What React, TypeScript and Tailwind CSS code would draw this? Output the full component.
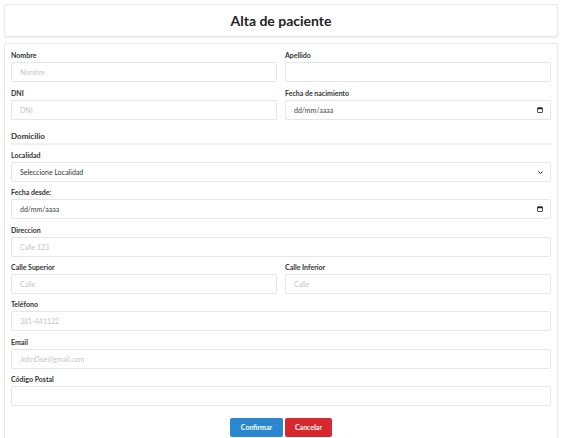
import type { ReactNode } from "react";

function Label({ children }: { children: ReactNode }) {
  return <div className="h-[11px] text-[7px] leading-[9px] font-bold text-[#333]">{children}</div>;
}

function TextField({ label, placeholder }: { label: string; placeholder?: string }) {
  return (
    <div className="flex flex-col">
      <Label>{label}</Label>
      <input
        type="text"
        placeholder={placeholder}
        className="h-[20px] w-full rounded-[2px] border border-[#e6e6e6] bg-white px-[8px] text-[7px] text-[#333] placeholder:text-[#c4c4c4] outline-none"
      />
    </div>
  );
}

function CalendarIcon() {
  return (
    <svg width="6" height="6" viewBox="0 0 12 12" className="shrink-0">
      <rect x="1" y="1.5" width="10" height="9.5" rx="1" fill="none" stroke="#222" strokeWidth="1.6" />
      <rect x="1" y="1.5" width="10" height="3" fill="#222" />
    </svg>
  );
}

function DateField({ label }: { label: string }) {
  return (
    <div className="flex flex-col">
      <Label>{label}</Label>
      <div className="flex h-[20px] items-center justify-between rounded-[2px] border border-[#e6e6e6] bg-white pl-[8px] pr-[7px] text-[7px] text-[#444]">
        <span>dd/mm/aaaa</span>
        <CalendarIcon />
      </div>
    </div>
  );
}

export default function App() {
  return (
    <div className="min-h-[438px] bg-white pt-[4px] pl-[4px] font-['Lato','Liberation_Sans',sans-serif]">
      <div className="w-[554px]">
        <div className="flex h-[33px] items-center justify-center rounded-[3px] border border-[#e8e8e8] bg-white shadow-[0_1px_2px_rgba(0,0,0,0.08)]">
          <h1 className="text-[14px] font-bold text-[#222]">Alta de paciente</h1>
        </div>

        <div className="mt-[6px] rounded-[3px] border border-[#e8e8e8] bg-white px-[6px] pt-[7px] pb-[10px] shadow-[0_1px_2px_rgba(0,0,0,0.06)]">
          <div className="grid grid-cols-2 gap-x-[8px] gap-y-[7px]">
            <TextField label="Nombre" placeholder="Nombre" />
            <TextField label="Apellido" />
            <TextField label="DNI" placeholder="DNI" />
            <DateField label="Fecha de nacimiento" />
          </div>

          <div className="mt-[6px] mb-[6px] border-b-2 border-[#f0f0f0] pt-[4px] pb-[1px] text-[8px] leading-[12px] font-bold text-[#333]">
            Domicilio
          </div>

          <div className="flex flex-col gap-[6.33px]">
            <div className="flex flex-col">
              <Label>Localidad</Label>
              <div className="flex h-[20px] items-center justify-between rounded-[2px] border border-[#e6e6e6] bg-white pl-[8px] pr-[7px] text-[7px] text-[#333]">
                <span>Seleccione Localidad</span>
                <svg width="5" height="3" viewBox="0 0 10 6">
                  <path d="M1 1l4 4 4-4" fill="none" stroke="#222" strokeWidth="2" />
                </svg>
              </div>
            </div>
            <DateField label="Fecha desde:" />
            <TextField label="Direccion" placeholder="Calle 123" />
            <div className="grid grid-cols-2 gap-x-[8px]">
              <TextField label="Calle Superior" placeholder="Calle" />
              <TextField label="Calle Inferior" placeholder="Calle" />
            </div>
            <TextField label="Teléfono" placeholder="381-441122" />
            <TextField label="Email" placeholder="JohnDoe@gmail.com" />
            <TextField label="Código Postal" />
          </div>

          <div className="mt-[12px] flex justify-center gap-[2px]">
            <button className="h-[19px] w-[53px] rounded-[2px] bg-[#2a87d0] text-[7px] font-bold text-white">Confirmar</button>
            <button className="h-[19px] w-[47px] rounded-[2px] bg-[#d9272e] text-[7px] font-bold text-white">Cancelar</button>
          </div>
        </div>
      </div>
    </div>
  );
}
